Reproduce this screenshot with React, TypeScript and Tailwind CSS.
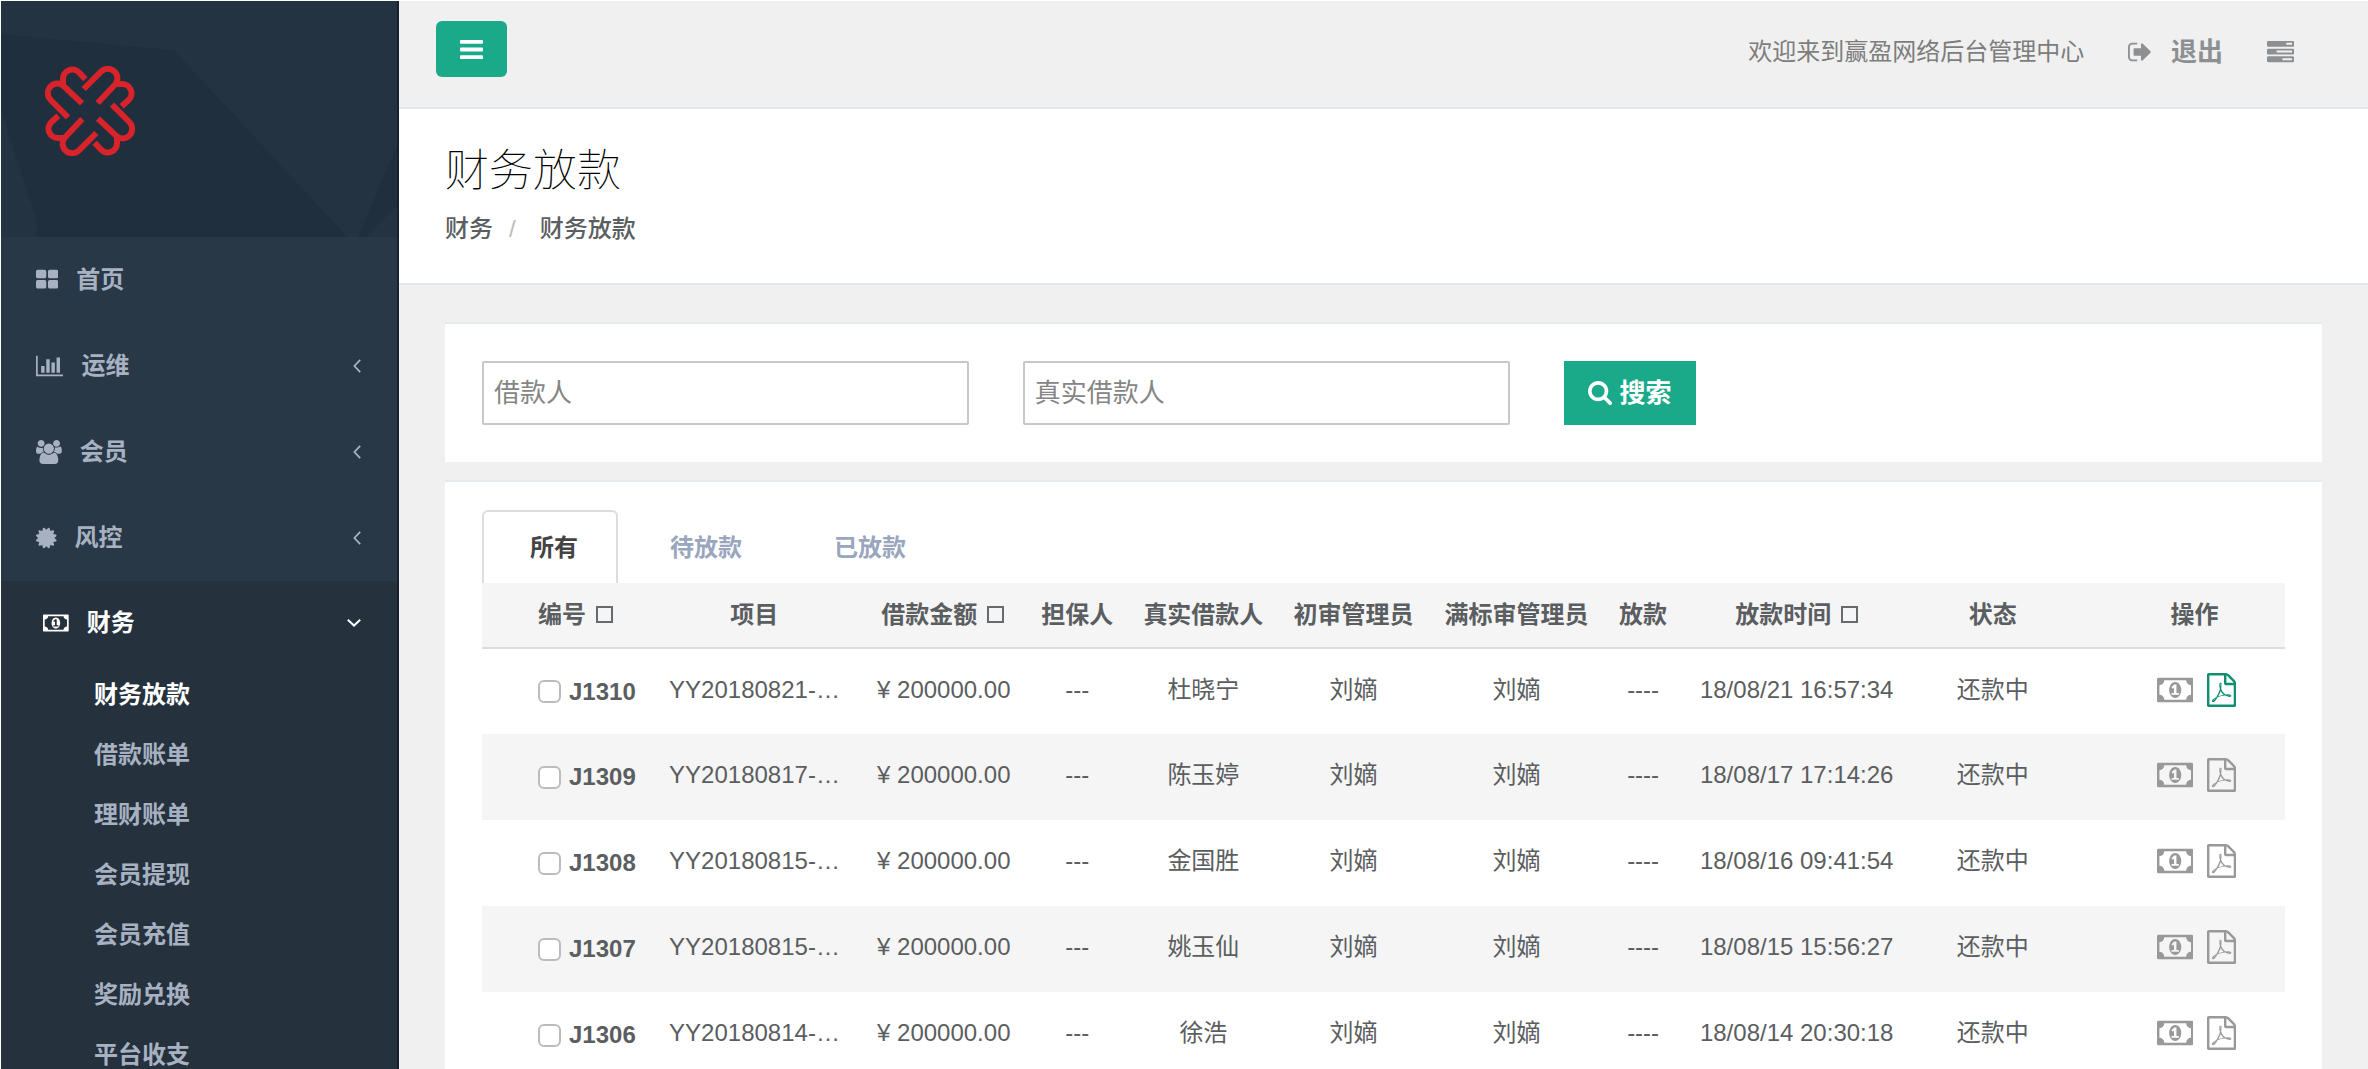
import { ReactNode } from "react";

type IconProps = {
  className?: string;
};

type MenuItem = {
  label: string;
  icon: ReactNode;
  expandable: boolean;
};

type Loan = {
  id: string;
  project: string;
  borrower: string;
  time: string;
};

const ThLargeIcon = ({ className }: IconProps) => (
  <svg viewBox="64 0 1664 1792" fill="currentColor" className={className} aria-hidden="true">
    <path d="M832 1024v384q0 52-38 90t-90 38h-512q-52 0-90-38t-38-90v-384q0-52 38-90t90-38h512q52 0 90 38t38 90zm0-768v384q0 52-38 90t-90 38h-512q-52 0-90-38t-38-90v-384q0-52 38-90t90-38h512q52 0 90 38t38 90zm896 768v384q0 52-38 90t-90 38h-512q-52 0-90-38t-38-90v-384q0-52 38-90t90-38h512q52 0 90 38t38 90zm0-768v384q0 52-38 90t-90 38h-512q-52 0-90-38t-38-90v-384q0-52 38-90t90-38h512q52 0 90 38t38 90z" />
  </svg>
);

const BarChartIcon = ({ className }: IconProps) => (
  <svg viewBox="0 0 2048 1792" fill="currentColor" className={className} aria-hidden="true">
    <path d="M640 896v512h-256v-512h256zm384-512v1024h-256v-1024h256zm1024 1152v128h-2048v-1536h128v1408h1920zm-640-896v768h-256v-768h256zm384-384v1152h-256v-1152h256z" />
  </svg>
);

const GroupIcon = ({ className }: IconProps) => (
  <svg viewBox="64 0 1920 1792" fill="currentColor" className={className} aria-hidden="true">
    <path d="M657 896q-162 5-265 128h-134q-82 0-138-40.5t-56-118.5q0-353 124-353 6 0 43.5 21t97.5 42.5 119 21.5q67 0 133-23-5 37-5 66 0 159 90 290zm1071 637q0 120-73 189.5t-194 69.5h-874q-121 0-194-69.5t-73-189.5q0-53 3.5-103.5t14-109 26.5-108.5 43-97.5 62-81 85.5-53.5 111.5-20q10 0 43 21.5t73 48 107 48 135 21.5 135-21.5 107-48 73-48 43-21.5q61 0 111.5 20t85.5 53.5 62 81 43 97.5 26.5 108.5 14 109 3.5 103.5zm-1024-1277q0 106-75 181t-181 75-181-75-75-181 75-181 181-75 181 75 75 181zm704 384q0 159-112.5 271.5t-271.5 112.5-271.5-112.5-112.5-271.5 112.5-271.5 271.5-112.5 271.5 112.5 112.5 271.5zm576 225q0 78-56 118.5t-138 40.5h-134q-103-123-265-128 90-131 90-290 0-29-5-66 66 23 133 23 59 0 119-21.5t97.5-42.5 43.5-21q124 0 124 353zm-128-609q0 106-75 181t-181 75-181-75-75-181 75-181 181-75 181 75 75 181z" />
  </svg>
);

const CertificateIcon = ({ className }: IconProps) => (
  <svg viewBox="128 0 1536 1792" fill="currentColor" className={className} aria-hidden="true">
    <path d="M1504 896l138 135q30 28 20 70-12 41-52 51l-188 48 53 186q12 41-19 70-29 31-70 19l-186-53-48 188q-10 40-51 52-12 2-19 2-31 0-51-22l-135-138-135 138q-28 30-70 20-41-11-51-52l-48-188-186 53q-41 12-70-19-31-29-19-70l53-186-188-48q-40-10-52-51-10-42 20-70l138-135-138-135q-30-28-20-70 12-41 52-51l188-48-53-186q-12-41 19-70 29-31 70-19l186 53 48-188q10-41 51-51 41-12 70 19l135 139 135-139q29-30 70-19 41 10 51 51l48 188 186-53q41-12 70 19 31 29 19 70l-53 186 188 48q40 10 52 51 10 42-20 70z" />
  </svg>
);

const MoneyIcon = ({ className }: IconProps) => (
  <svg viewBox="0 0 1920 1792" fill="currentColor" className={className} aria-hidden="true">
    <path d="M768 1152h384v-96h-128v-448h-114l-148 137 77 80q42-37 55-57h2v288h-128v96zm512-256q0 70-21 142t-59.5 134-101.5 101-138 39-138-39-101.5-101-59.5-134-21-142 21-142 59.5-134 101.5-101 138-39 138 39 101.5 101 59.5 134 21 142zm512 256v-512q-106 0-181-75t-75-181h-1152q0 106-75 181t-181 75v512q106 0 181 75t75 181h1152q0-106 75-181t181-75zm128-832v1152q0 26-19 45t-45 19h-1792q-26 0-45-19t-19-45v-1152q0-26 19-45t45-19h1792q26 0 45 19t19 45z" />
  </svg>
);

const FilePdfIcon = ({ className }: IconProps) => (
  <svg viewBox="128 0 1536 1792" fill="currentColor" className={className} aria-hidden="true">
    <path d="M1596 380q28 28 48 76t20 88v1152q0 40-28 68t-68 28h-1344q-40 0-68-28t-28-68v-1600q0-40 28-68t68-28h896q40 0 88 20t76 48zm-444-244v376h376q-10-29-22-41l-313-313q-12-12-41-22zm384 1528v-1024h-416q-40 0-68-28t-28-68v-416h-768v1536h1280zm-514-593q33 26 84 56 59-7 117-7 147 0 177 49 16 22 2 52 0 1-1 2l-2 2v1q-6 38-71 38-48 0-115-20t-130-53q-221 24-392 83-153 262-242 262-15 0-28-7l-24-12q-1-1-6-5-10-10-6-36 9-40 56-91.5t132-96.5q14-9 23 6 2 2 2 4 52-85 107-197 68-136 104-262-24-82-30.5-159.5t6.5-127.5q11-40 42-40h22q23 0 35 15 18 21 9 68-2 6-4 8 1 3 1 8v30q-2 123-14 192 55 164 146 238zm-576 411q52-24 137-158-51 40-87.5 84t-49.5 74zm398-920q-15 42-2 132 1-7 7-44 0-3 7-43 1-4 4-8-1-1-1-2t-1-2q-1-1-1-3t-1-3q-1-22-13-36 0 1-1 2v2zm-124 661q135-54 284-81-2-1-13-9.5t-16-13.5q-76-67-127-176-27 86-83 197-30 56-45 83zm646-16q-24-24-140-24 76 28 124 28 14 0 18-1 0-1-2-3z" />
  </svg>
);

const BarsIcon = ({ className }: IconProps) => (
  <svg viewBox="128 128 1536 1536" fill="currentColor" className={className} aria-hidden="true">
    <path d="M1664 1344v128q0 26-19 45t-45 19h-1408q-26 0-45-19t-19-45v-128q0-26 19-45t45-19h1408q26 0 45 19t19 45zm0-512v128q0 26-19 45t-45 19h-1408q-26 0-45-19t-19-45v-128q0-26 19-45t45-19h1408q26 0 45 19t19 45zm0-512v128q0 26-19 45t-45 19h-1408q-26 0-45-19t-19-45v-128q0-26 19-45t45-19h1408q26 0 45 19t19 45z" />
  </svg>
);

const SignOutIcon = ({ className }: IconProps) => (
  <svg viewBox="64 0 1568 1792" fill="currentColor" className={className} aria-hidden="true">
    <path d="M704 1440q0 4 1 20t.5 26.5-3 23.5-10 19.5-20.5 6.5h-320q-119 0-203.5-84.5t-84.5-203.5v-704q0-119 84.5-203.5t203.5-84.5h320q13 0 22.5 9.5t9.5 22.5q0 4 1 20t.5 26.5-3 23.5-10 19.5-20.5 6.5h-320q-66 0-113 47t-47 113v704q0 66 47 113t113 47h312l11.5 1 11.5 3 8 5.5 7 9 2 13.5zm928-544q0 26-19 45l-544 544q-19 19-45 19t-45-19-19-45v-288h-448q-26 0-45-19t-19-45v-384q0-26 19-45t45-19h448v-288q0-26 19-45t45-19 45 19l544 544q19 19 19 45z" />
  </svg>
);

const TasksIcon = ({ className }: IconProps) => (
  <svg viewBox="0 0 1792 1792" fill="currentColor" className={className} aria-hidden="true">
    <path d="M1024 1408h640v-128h-640v128zm-384-512h1024v-128h-1024v128zm640-512h384v-128h-384v128zm512 832v256q0 26-19 45t-45 19h-1664q-26 0-45-19t-19-45v-256q0-26 19-45t45-19h1664q26 0 45 19t19 45zm0-512v256q0 26-19 45t-45 19h-1664q-26 0-45-19t-19-45v-256q0-26 19-45t45-19h1664q26 0 45 19t19 45zm0-512v256q0 26-19 45t-45 19h-1664q-26 0-45-19t-19-45v-256q0-26 19-45t45-19h1664q26 0 45 19t19 45z" />
  </svg>
);

const SearchIcon = ({ className }: IconProps) => (
  <svg viewBox="64 128 1664 1664" fill="currentColor" className={className} aria-hidden="true">
    <path d="M1216 832q0-185-131.5-316.5t-316.5-131.5-316.5 131.5-131.5 316.5 131.5 316.5 316.5 131.5 316.5-131.5 131.5-316.5zm512 832q0 52-38 90t-90 38q-54 0-90-38l-343-342q-179 124-399 124-143 0-273.5-55.5t-225-150-150-225-55.5-273.5 55.5-273.5 150-225 225-150 273.5-55.5 273.5 55.5 225 150 150 225 55.5 273.5q0 220-124 399l343 343q37 37 37 90z" />
  </svg>
);

const AngleLeftIcon = ({ className }: IconProps) => (
  <svg viewBox="0 0 8 14" fill="none" stroke="currentColor" strokeWidth="1.8" className={className} aria-hidden="true">
    <path d="M7.2 0.8 L1.4 7 L7.2 13.2" />
  </svg>
);

const AngleDownIcon = ({ className }: IconProps) => (
  <svg viewBox="0 0 14 8" fill="none" stroke="currentColor" strokeWidth="2" className={className} aria-hidden="true">
    <path d="M0.8 0.8 L7 6.6 L13.2 0.8" />
  </svg>
);

// one corner of the knot, turned four times round the centre
const Logo = ({ className }: IconProps) => (
  <svg viewBox="136 196 270 270" fill="none" stroke="#d8232a" strokeWidth="18" className={className} role="img" aria-label="logo">
    {[0, 90, 180, 270].map((angle) => (
      <g key={angle} transform={`rotate(${angle} 271 331)`}>
        <path d="M257 236 L239 216 A28 28 0 0 0 190 236 V252" />
        <path d="M205 350 L153 298 A28 28 0 0 1 193 257 L247 308" />
      </g>
    ))}
  </svg>
);

const menu: MenuItem[] = [
  { label: "首页", icon: <ThLargeIcon className="h-6" />, expandable: false },
  { label: "运维", icon: <BarChartIcon className="h-6" />, expandable: true },
  { label: "会员", icon: <GroupIcon className="h-6" />, expandable: true },
  { label: "风控", icon: <CertificateIcon className="h-6" />, expandable: true },
];

const subMenu = ["财务放款", "借款账单", "理财账单", "会员提现", "会员充值", "奖励兑换", "平台收支"];

const tabs = ["所有", "待放款", "已放款"];

const columns = [
  { title: "编号", sortable: true, width: "w-[169px]", cell: "pl-14 text-left" },
  { title: "项目", sortable: false, width: "w-[206px]", cell: "" },
  { title: "借款金额", sortable: true, width: "w-[171px]", cell: "" },
  { title: "担保人", sortable: false, width: "w-[98px]", cell: "" },
  { title: "真实借款人", sortable: false, width: "w-[154px]", cell: "" },
  { title: "初审管理员", sortable: false, width: "w-[146px]", cell: "" },
  { title: "满标审管理员", sortable: false, width: "w-[180px]", cell: "" },
  { title: "放款", sortable: false, width: "w-[73px]", cell: "" },
  { title: "放款时间", sortable: true, width: "w-[234px]", cell: "" },
  { title: "状态", sortable: false, width: "w-[158px]", cell: "" },
  { title: "操作", sortable: false, width: "w-[213px]", cell: "pl-8" },
];

const loans: Loan[] = [
  { id: "J1310", project: "YY20180821-…", borrower: "杜晓宁", time: "18/08/21 16:57:34" },
  { id: "J1309", project: "YY20180817-…", borrower: "陈玉婷", time: "18/08/17 17:14:26" },
  { id: "J1308", project: "YY20180815-…", borrower: "金国胜", time: "18/08/16 09:41:54" },
  { id: "J1307", project: "YY20180815-…", borrower: "姚玉仙", time: "18/08/15 15:56:27" },
  { id: "J1306", project: "YY20180814-…", borrower: "徐浩", time: "18/08/14 20:30:18" },
];

const Sidebar = () => {
  return (
    <aside className="w-[398px] shrink-0 overflow-hidden border-r-2 border-[#16222f] bg-[#293846] text-2xl font-bold text-[#a7b1c2]">
      <div className="relative h-[236px] bg-[#233341]">
        <svg
          viewBox="0 0 396 235"
          preserveAspectRatio="none"
          fill="#202f3d"
          className="absolute inset-0 size-full"
          aria-hidden="true"
        >
          <path d="M0 33 L173 49 L346 235 L34 235 L37 223 L0 108 Z" />
          <path d="M357 235 L396 144 V204 L365 235 Z" />
        </svg>
        <div className="relative pt-[65px] pl-11">
          <Logo className="size-[90px]" />
        </div>
      </div>
      <nav>
        {menu.map((item) => (
          <a key={item.label} href="#" className="flex h-[86px] items-center pr-9 pl-[35px]">
            {item.icon}
            <span className="ml-[18px]">{item.label}</span>
            {item.expandable && <AngleLeftIcon className="ml-auto h-[14px]" />}
          </a>
        ))}
        <div className="bg-[#25313d]">
          <a href="#" className="flex h-[84px] items-center pr-9 pl-[42px] text-white">
            <MoneyIcon className="h-6" />
            <span className="ml-[18px]">财务</span>
            <AngleDownIcon className="ml-auto w-[14px]" />
          </a>
          <ul>
            {subMenu.map((label, index) => (
              <li key={label}>
                <a
                  href="#"
                  className={`flex h-[60px] items-center pl-[93px] ${index === 0 ? "text-white" : ""}`}
                >
                  {label}
                </a>
              </li>
            ))}
          </ul>
        </div>
      </nav>
    </aside>
  );
};

const TopBar = () => {
  return (
    <header className="flex h-[108px] items-start justify-between border-b-2 border-[#e4e8ea] pt-5 pr-[74px] pl-[37px]">
      <button
        type="button"
        aria-label="菜单"
        className="flex h-14 w-[71px] items-center justify-center rounded-md bg-[#1aaa8a] text-white"
      >
        <BarsIcon className="size-[23px]" />
      </button>
      <div className="flex h-[62px] items-center text-[#8d9092]">
        <span className="text-2xl text-[#7d7d7d]">欢迎来到赢盈网络后台管理中心</span>
        <a href="#" className="ml-11 flex items-center gap-5 text-[26px] font-bold">
          <SignOutIcon className="h-[26px]" />
          退出
        </a>
        <button type="button" aria-label="任务" className="ml-11">
          <TasksIcon className="size-[27px]" />
        </button>
      </div>
    </header>
  );
};

const PageHeading = () => {
  return (
    <div className="h-[176px] border-b-2 border-[#e4e8ea] bg-white pt-8 pl-[46px]">
      <h1 className="text-[44px] leading-[60px] font-thin text-black">财务放款</h1>
      <ol className="mt-3 flex text-2xl font-medium">
        <li>
          <a href="#">财务</a>
        </li>
        <li className="px-4 font-normal text-[#bbbbbb]">/</li>
        <li className="pl-2">财务放款</li>
      </ol>
    </div>
  );
};

const SearchForm = () => {
  return (
    <form className="flex gap-[54px] border-t-2 border-[#e7eaec] bg-white px-[37px] py-[37px] text-[26px]">
      <input
        type="text"
        aria-label="借款人"
        placeholder="借款人"
        className="h-[64px] w-[27%] rounded-xs border-2 border-[#c8c8c8] px-[10px] placeholder:text-[#858585]"
      />
      <input
        type="text"
        aria-label="真实借款人"
        placeholder="真实借款人"
        className="h-[64px] w-[27%] rounded-xs border-2 border-[#c8c8c8] px-[10px] placeholder:text-[#858585]"
      />
      <button
        type="button"
        className="flex h-[64px] items-center gap-2 bg-[#1aaa8a] px-6 font-bold text-white"
      >
        <SearchIcon className="size-6" />
        搜索
      </button>
    </form>
  );
};

const LoanTable = () => {
  return (
    <table className="w-full table-fixed text-center text-2xl">
      <thead className="border-b-2 border-[#dddddd] bg-[#f5f5f6]">
        <tr className="h-[65px]">
          {columns.map((column) => (
            <th key={column.title} className={`font-bold whitespace-nowrap ${column.width} ${column.cell}`}>
              {column.title}
              {column.sortable && <span className="ml-[10px] inline-block size-[17px] border-2 border-[#676a6c]" />}
            </th>
          ))}
        </tr>
      </thead>
      <tbody>
        {loans.map((loan, index) => (
          <tr key={loan.id} className="h-[86px] even:bg-[#f5f5f5] *:pb-1">
            <td className="pl-14">
              <label className="flex items-center gap-2 pt-1 font-bold">
                <input
                  type="checkbox"
                  className="size-[23px] appearance-none rounded-md border-2 border-[#bcbcbc] bg-white"
                />
                {loan.id}
              </label>
            </td>
            <td className="pl-[18px] text-left">{loan.project}</td>
            <td className="pl-[2px]">¥ 200000.00</td>
            <td>---</td>
            <td>{loan.borrower}</td>
            <td>刘嫡</td>
            <td>刘嫡</td>
            <td>----</td>
            <td>{loan.time}</td>
            <td>还款中</td>
            <td className="pl-9">
              <div className="flex items-center justify-center gap-[14px] text-[#999999]">
                <a href="#" aria-label="放款">
                  <MoneyIcon className="h-[34px]" />
                </a>
                <a href="#" aria-label="合同" className={index === 0 ? "text-[#0f8f6f]" : ""}>
                  <FilePdfIcon className="h-[34px]" />
                </a>
              </div>
            </td>
          </tr>
        ))}
      </tbody>
    </table>
  );
};

const App = () => {
  return (
    <div className="flex h-screen overflow-hidden border-t border-l border-white bg-[#f0f0f0] font-['Liberation_Sans','Noto_Sans_CJK_SC',sans-serif] text-[#5b5e60]">
      <Sidebar />
      <main className="min-w-0 flex-1 overflow-hidden">
        <TopBar />
        <PageHeading />
        <div className="flex flex-col gap-[18px] pt-[37px] pr-[46px] pl-[46px]">
          <SearchForm />
          <section className="border-t-2 border-[#e7eaec] bg-white px-[37px] pt-[28px]">
            <div className="flex gap-1 text-2xl font-bold">
              {tabs.map((tab, index) => (
                <button
                  key={tab}
                  type="button"
                  className={`h-[73px] border-2 border-b-0 pr-[38px] pl-[46px] ${
                    index === 0 ? "rounded-t-md border-[#dddddd] text-[#444444]" : "border-transparent text-[#9aa6bd]"
                  }`}
                >
                  {tab}
                </button>
              ))}
            </div>
            <LoanTable />
          </section>
        </div>
      </main>
    </div>
  );
};

export default App;
